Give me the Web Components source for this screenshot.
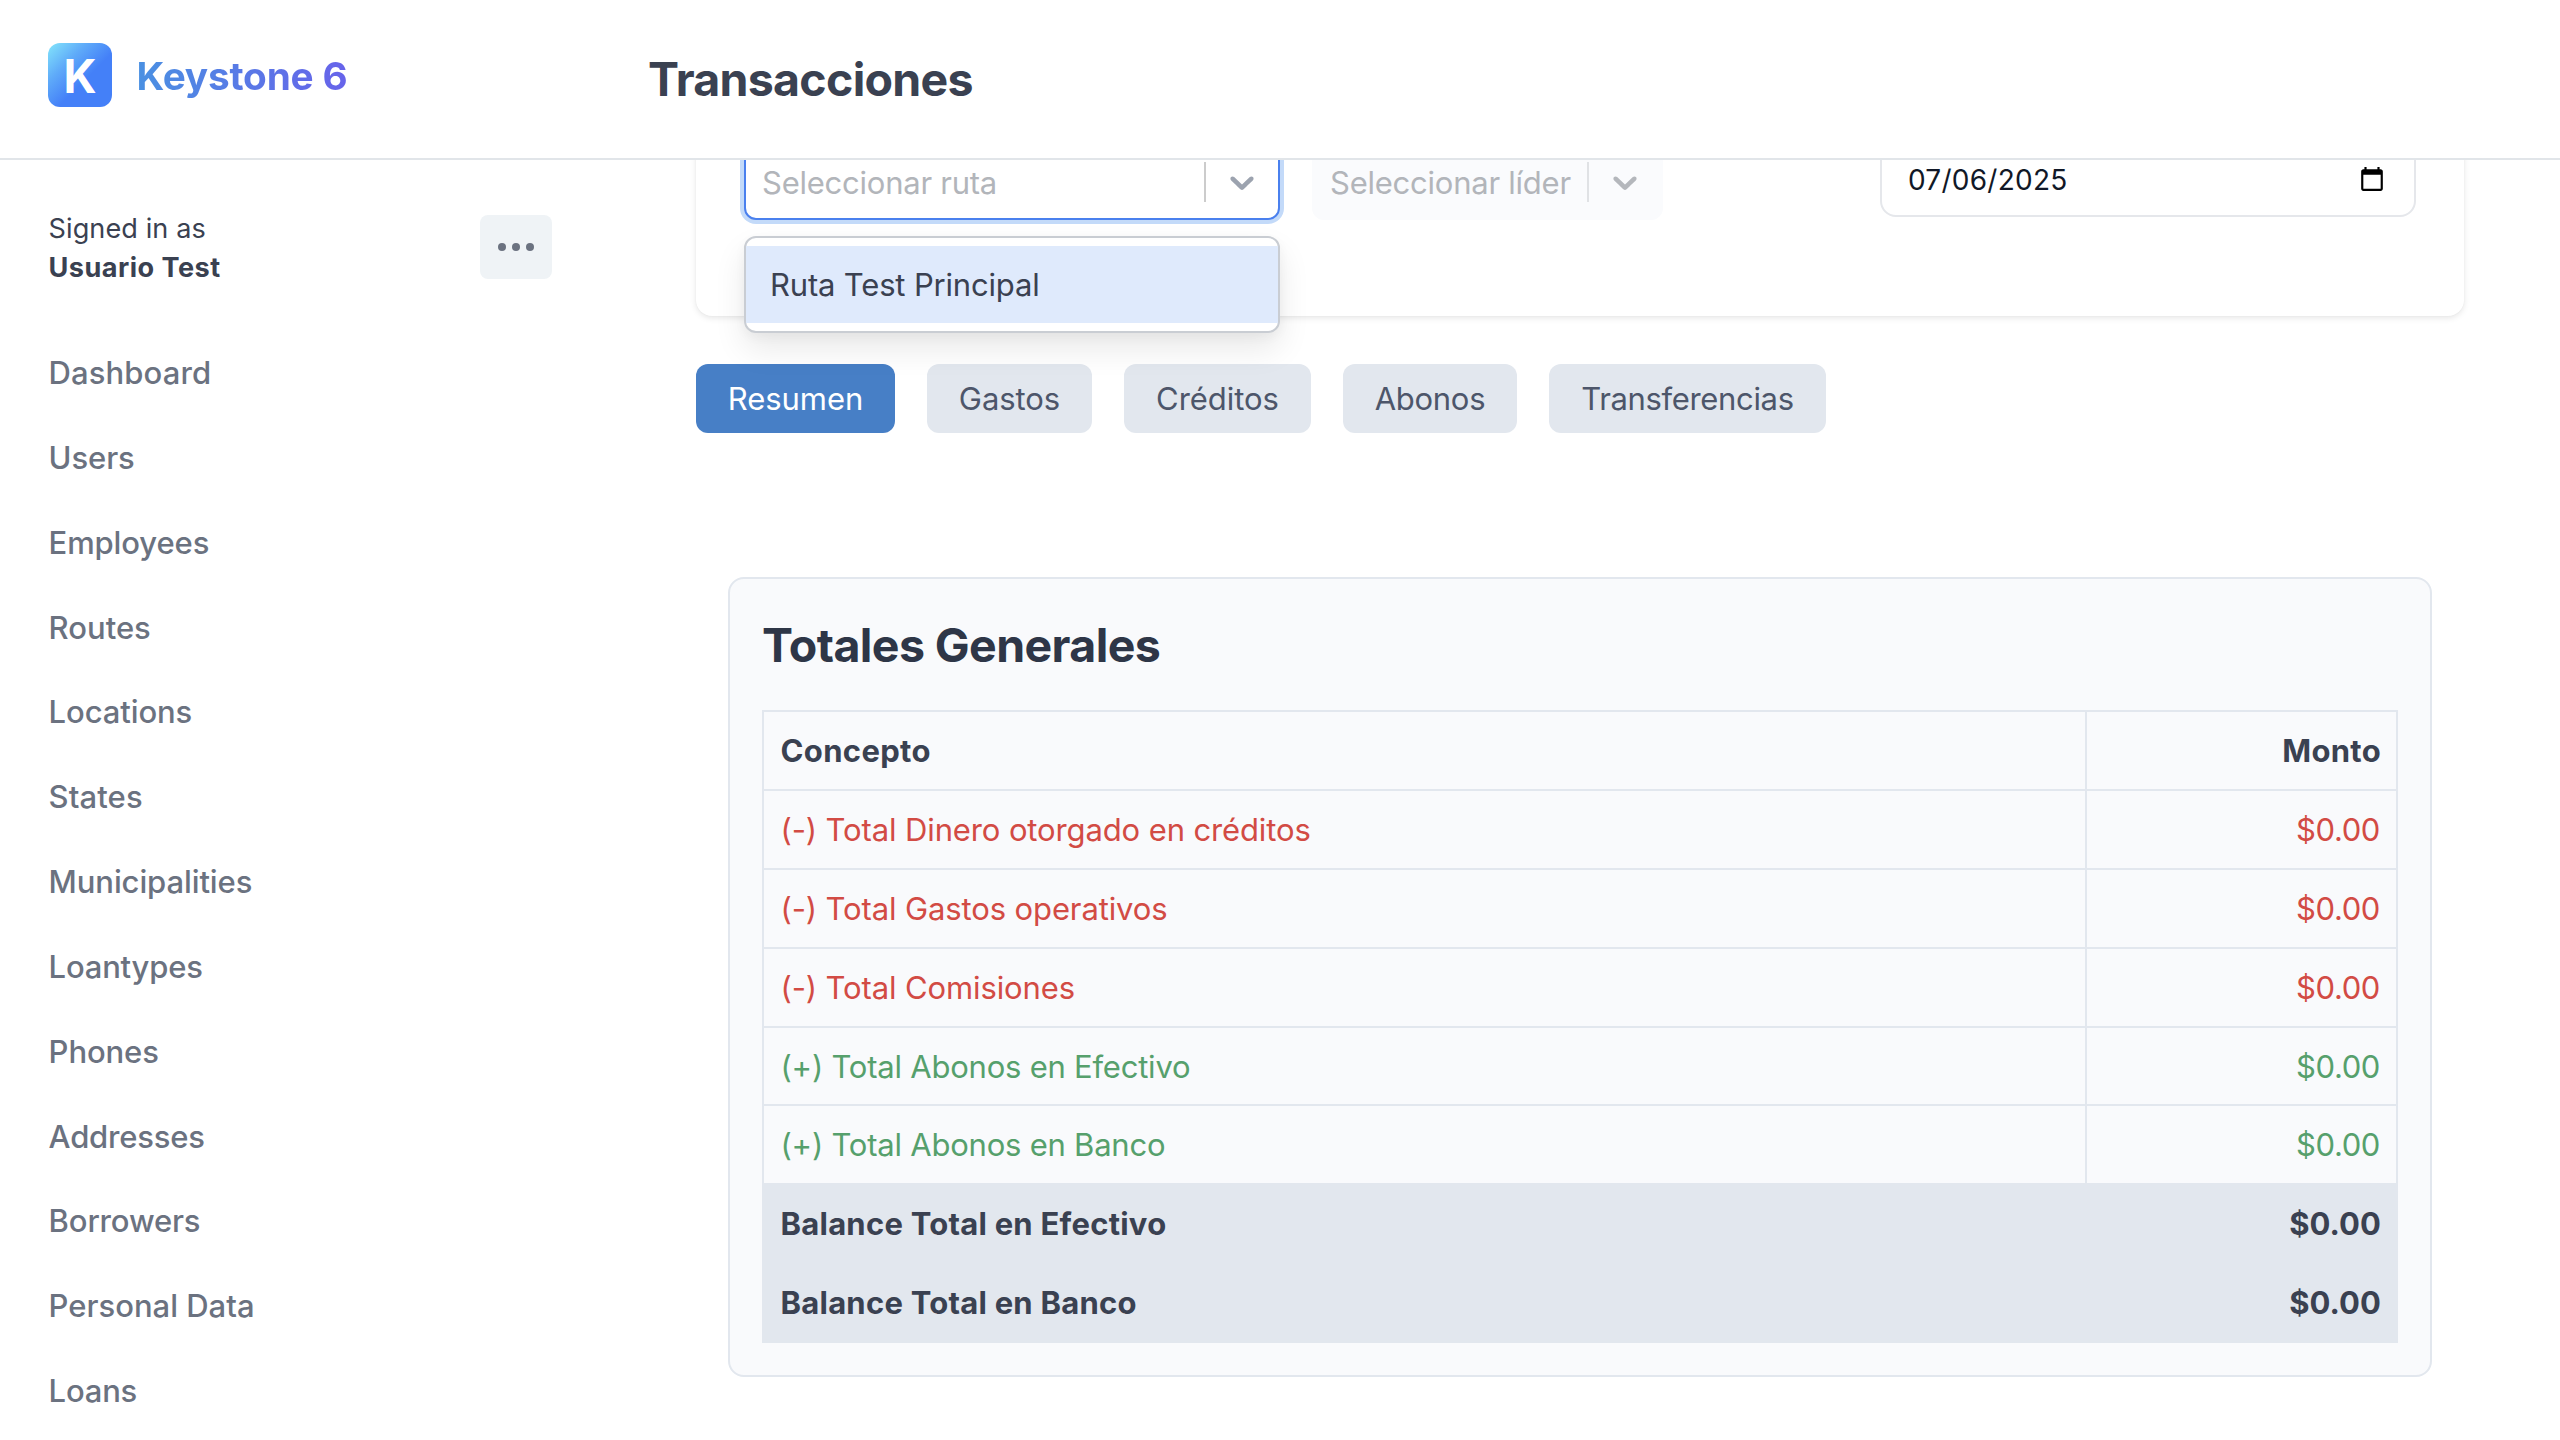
<!DOCTYPE html>
<html lang="es">
<head>
<meta charset="utf-8">
<title>Transacciones</title>
<style>
  html, body { margin: 0; height: 100%; background: #fff; overflow: hidden; }
  body { font-family: Inter, "Liberation Sans", sans-serif; color: #394150; }
</style>
</head>
<body>
<ks-app>
  <ks-header slot="header" heading="Transacciones"></ks-header>
  <ks-sidebar slot="sidebar" user="Usuario Test">
    <ks-nav-item ls=".1">Dashboard</ks-nav-item>
    <ks-nav-item ls="-.1">Users</ks-nav-item>
    <ks-nav-item ls="-.12">Employees</ks-nav-item>
    <ks-nav-item>Routes</ks-nav-item>
    <ks-nav-item ls="-.1">Locations</ks-nav-item>
    <ks-nav-item ls=".1">States</ks-nav-item>
    <ks-nav-item ls="-.1">Municipalities</ks-nav-item>
    <ks-nav-item ls="-.2">Loantypes</ks-nav-item>
    <ks-nav-item ls="-.1">Phones</ks-nav-item>
    <ks-nav-item ls="-.2">Addresses</ks-nav-item>
    <ks-nav-item ls="-.15">Borrowers</ks-nav-item>
    <ks-nav-item>Personal Data</ks-nav-item>
    <ks-nav-item ls="-.2">Loans</ks-nav-item>
  </ks-sidebar>
  <ks-filters>
    <ks-select focused placeholder="Seleccionar ruta"><ks-menu slot="menu">Ruta Test Principal</ks-menu></ks-select>
    <ks-select disabled placeholder="Seleccionar líder"></ks-select>
    <ks-date>07/06/2025</ks-date>
  </ks-filters>
  <ks-tabs>
    <ks-tab active w="199">Resumen</ks-tab>
    <ks-tab w="165">Gastos</ks-tab>
    <ks-tab w="187">Créditos</ks-tab>
    <ks-tab w="174" ls="-.3">Abonos</ks-tab>
    <ks-tab w="277" ls="-.34">Transferencias</ks-tab>
  </ks-tabs>
  <ks-totals heading="Totales Generales">
    <ks-row kind="head" amount="Monto">Concepto</ks-row>
    <ks-row kind="minus" amount="$0.00">(-) Total Dinero otorgado en créditos</ks-row>
    <ks-row kind="minus" amount="$0.00">(-) Total Gastos operativos</ks-row>
    <ks-row kind="minus" amount="$0.00">(-) Total Comisiones</ks-row>
    <ks-row kind="plus" amount="$0.00">(+) Total Abonos en Efectivo</ks-row>
    <ks-row kind="plus" amount="$0.00">(+) Total Abonos en Banco</ks-row>
    <ks-row kind="balance" amount="$0.00">Balance Total en Efectivo</ks-row>
    <ks-row kind="balance" amount="$0.00">Balance Total en Banco</ks-row>
  </ks-totals>
</ks-app>
<script>
class Base extends HTMLElement {
  connectedCallback() {
    if (this.shadowRoot) return;
    this.attachShadow({ mode: 'open' }).innerHTML = this.render();
    const ls = this.getAttribute('ls');
    if (ls) this.style.letterSpacing = ls + 'px';
    const w = this.getAttribute('w');
    if (w) this.style.width = w + 'px';
  }
}
const define = (name, render) =>
  customElements.define(name, class extends Base { render() { return render(this); } });

define('ks-app', () => `
<style>
  :host { display: grid; grid-template: 160px 1280px / 648px 1fr; width: 2560px; height: 1440px; overflow: hidden; }
  .head { grid-column: 1 / 3; }
  main { overflow: hidden; padding: 0 96px 0 48px; display: flex; flex-direction: column; align-items: stretch; }
</style>
<div class="head"><slot name="header"></slot></div>
<slot name="sidebar"></slot>
<main><slot></slot></main>`);

define('ks-header', el => `
<style>
  :host { display: grid; grid-template-columns: 600px 1fr; box-sizing: border-box; height: 160px; padding-left: 48px; border-bottom: 2px solid #e1e5e9; background: #fff; }
  .brand { display: flex; gap: 24.5px; padding-top: 43px; }
  .logo { display: flex; justify-content: center; width: 64px; height: 64px; border-radius: 12px; background: linear-gradient(135deg, #84e6fb 0%, #5fabf9 30%, #4480f8 58%, #4480f8 100%); color: #fff; font: 700 46px/67px Inter, sans-serif; }
  .name { height: 66px; font-size: 38.75px; font-weight: 650; line-height: 66px; letter-spacing: -.2px; background: linear-gradient(90deg, #4a90e2, #6763ea); -webkit-background-clip: text; background-clip: text; color: transparent; }
  h1 { margin: 0; font-size: 46.5px; font-weight: 700; line-height: 159px; letter-spacing: -.72px; color: #3a4151; }
</style>
<div class="brand"><div class="logo">K</div><div class="name">Keystone 6</div></div>
<h1>${el.getAttribute('heading')}</h1>`);

define('ks-sidebar', el => `
<style>
  :host { display: flex; flex-direction: column; width: 552px; box-sizing: border-box; padding: 48px 0 0 48px; }
  .user { display: flex; justify-content: space-between; align-items: center; height: 80px; }
  .who { padding-left: .5px; font-size: 27.1px; line-height: 39.2px; color: #3a4151; letter-spacing: .09px; }
  .who b { display: block; font-weight: 700; letter-spacing: .47px; }
  .more { display: flex; align-items: center; justify-content: center; gap: 6px; width: 72px; height: 64px; margin-bottom: 2px; border-radius: 8px; background: #eff3f6; }
  .more i { width: 8px; height: 8px; border-radius: 50%; background: #6b7280; }
  nav { display: flex; flex-direction: column; padding: 43px 0 0 .6px; }
</style>
<div class="user">
  <div class="who">Signed in as<b>${el.getAttribute('user')}</b></div>
  <div class="more"><i></i><i></i><i></i></div>
</div>
<nav><slot></slot></nav>`);

define('ks-nav-item', () => `
<style>:host { display: block; height: 84.85px; font-size: 31px; font-weight: 500; line-height: 84.85px; color: #6b7280; }</style>
<slot></slot>`);

define('ks-filters', () => `
<style>
  /* The card is scrolled partly beneath the header. */
  :host { display: grid; grid-template-columns: repeat(3, 536px); gap: 32px; align-items: start; box-sizing: border-box; height: 220px; flex: none; margin-top: -64px; padding: 48px; border-radius: 16px; background: #fff; box-shadow: 0 2px 6px rgba(0,0,0,.1), 0 0 2px rgba(0,0,0,.04); }
</style><slot></slot>`);

define('ks-select', el => `
<style>
  :host { display: flex; position: relative; box-sizing: border-box; height: 76px; border: 2px solid #fafbfd; border-radius: 12px; background: #fafbfd; width: 351px; --sep: #e0e2e5; --chev: #b4b7bc; }
  :host([focused]) { width: 536px; background: #fff; border-color: #4a80ee; box-shadow: 0 0 0 4px #c3daf9; --sep: #ccc; --chev: #9ca3af; }
  .ph { flex: 1; padding-left: 16px; font-size: 31px; line-height: 73px; letter-spacing: -.24px; color: #b2b5ba; white-space: nowrap; }
  .sep { width: 2px; margin: 16px 0; background: var(--sep); }
  svg { width: 40px; height: 40px; margin: 16px; fill: var(--chev); }
</style>
<div class="ph">${el.getAttribute('placeholder')}</div>
<div class="sep"></div>
<svg viewBox="0 0 20 20"><path d="M4.516 7.548c0.436-0.446 1.043-0.481 1.576 0l3.908 3.747 3.908-3.747c0.533-0.481 1.141-0.446 1.574 0 0.436 0.445 0.408 1.197 0 1.615-0.406 0.418-4.695 4.502-4.695 4.502-0.217 0.223-0.502 0.335-0.787 0.335s-0.57-0.112-0.789-0.335c0 0-4.287-4.084-4.695-4.502s-0.436-1.17 0-1.615z"/></svg>
<slot name="menu"></slot>`);

define('ks-menu', () => `
<style>
  :host { display: block; position: absolute; z-index: 5; left: -2px; top: 90px; box-sizing: border-box; width: 536px; height: 97px; padding: 8px 0; border: 2px solid #c9cdd3; border-radius: 12px; background: #fff; box-shadow: 0 16px 32px rgba(0,0,0,.09), 0 4px 12px rgba(0,0,0,.04); }
  .opt { height: 77px; padding-left: 24px; background: #dfeafc; font-size: 31px; line-height: 77px; letter-spacing: -.17px; color: #3a4151; }
</style>
<div class="opt"><slot></slot></div>`);

define('ks-date', () => `
<style>
  :host { display: flex; align-items: center; justify-content: space-between; box-sizing: border-box; height: 76px; margin-top: -3px; padding: 0 29px 0 26px; border: 2px solid #e5e7eb; border-radius: 16px; background: #fff; font-size: 28px; letter-spacing: .25px; color: #111827; }
  span { padding-top: 2px; }
  svg { width: 26px; height: 26px; fill: #000; }
</style>
<span><slot></slot></span>
<svg viewBox="0 0 24 24"><path d="M20 3h-1V1h-2v2H7V1H5v2H4c-1.1 0-2 .9-2 2v16c0 1.1.9 2 2 2h16c1.1 0 2-.9 2-2V5c0-1.1-.9-2-2-2zm0 18H4V8h16v13z"/></svg>`);

define('ks-tabs', () => `
<style>:host { display: flex; flex: none; gap: 32px; margin-top: 48px; }</style><slot></slot>`);

define('ks-tab', () => `
<style>
  :host { display: block; height: 69px; border-radius: 12px; background: #e2e7ee; color: #4d566a; font-size: 31px; line-height: 69px; letter-spacing: -.05px; text-align: center; }
  :host([active]) { background: #477fc6; color: #fff; }
</style><slot></slot>`);

define('ks-totals', el => `
<style>
  :host { display: block; box-sizing: border-box; flex: none; height: 800px; margin: 144px 32px 0; padding: 32px; border: 2px solid #e2e7ee; border-radius: 16px; background: #f9fafc; }
  h2 { margin: 0 0 31px; font-size: 46.5px; font-weight: 700; line-height: 68px; letter-spacing: -.6px; color: #2e3647; }
  .table { display: grid; grid-template-rows: 79px 79px 79px 79px 78px 79px 79px 81px; }
</style>
<h2>${el.getAttribute('heading')}</h2>
<div class="table"><slot></slot></div>`);

define('ks-row', el => `
<style>
  :host { display: grid; grid-template-columns: 1fr 313px; border-top: 2px solid #e2e7ee; font-size: 31px; line-height: 77px; color: #3a4151; }
  div { padding: 0 16px 0 16.5px; border-left: 2px solid #e2e7ee; letter-spacing: -.12px; white-space: nowrap; }
  .amt { text-align: right; border-right: 2px solid #e2e7ee; letter-spacing: -.4px; }
  :host([kind=minus]) { color: #d24b44; }
  :host([kind=plus]) { color: #56a06c; }
  :host([kind=plus]) .lbl { letter-spacing: -.22px; }
  :host([kind=head]), :host([kind=balance]) { font-weight: 700; }
  :host([kind=head]) .lbl { letter-spacing: .35px; }
  :host([kind=head]) .amt { letter-spacing: .3px; padding-right: 15px; }
  :host([kind=balance]) .lbl { letter-spacing: .24px; }
  :host([kind=balance]) .amt { letter-spacing: .05px; padding-right: 15px; }
  :host([kind=balance]) { background: #e2e7ee; }
</style>
<div class="lbl"><slot></slot></div><div class="amt">${el.getAttribute('amount')}</div>`);
</script>
</body>
</html>
